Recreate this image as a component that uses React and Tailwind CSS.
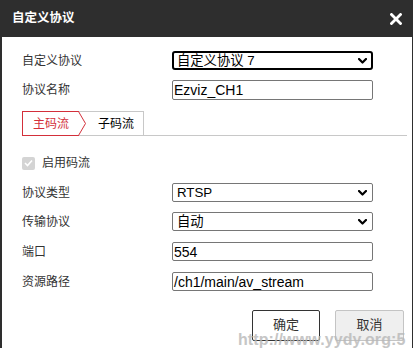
import React from "react";

const cjk = { fontFamily: '"Liberation Sans", "Noto Sans CJK SC", sans-serif' };

function Chevron() {
  return (
    <svg width="9" height="6" viewBox="0 0 9 6" className="shrink-0">
      <path d="M1 1 L4.5 4.5 L8 1" fill="none" stroke="#000" strokeWidth="2.2" strokeLinecap="round" strokeLinejoin="round" />
    </svg>
  );
}

function Label({ children }) {
  return <div className="w-[150px] shrink-0 text-[12px] leading-none text-[#333]">{children}</div>;
}

function FakeSelect({ value, focused }) {
  return (
    <div
      className={
        "w-[201px] h-full flex items-center justify-between bg-white text-[13.3px] leading-none text-black " +
        (focused ? "border-2 border-black rounded-[3px] pl-[3px] pr-[4px]" : "border border-[#767676] rounded-[2px] pl-[4px] pr-[5px]")
      }
    >
      <span>{value}</span>
      <Chevron />
    </div>
  );
}

function FakeInput({ value }) {
  return (
    <div className="w-[201px] h-full flex items-center border border-[#767676] rounded-[2px] pl-[1px] bg-white text-[14px] leading-none text-black">
      {value}
    </div>
  );
}

export default function App() {
  return (
    <div className="w-[413px] h-[348px] bg-[#2e2e2e] overflow-hidden relative" style={cjk}>
      <div className="h-[37px] flex items-center justify-between pl-[12px] pr-[11px]">
        <span className="text-white font-bold text-[12.5px] leading-none">自定义协议</span>
        <svg width="12" height="12" viewBox="0 0 12 12">
          <path d="M1.5 1.5 L10.5 10.5 M10.5 1.5 L1.5 10.5" stroke="#fff" strokeWidth="2.8" strokeLinecap="square" />
        </svg>
      </div>
      <div className="ml-[2px] mr-[1px] h-[311px] bg-white pl-[20px] pr-[5px] flex flex-col">
        <div className="mt-[14px] h-[19px] flex items-center">
          <Label>自定义协议</Label>
          <FakeSelect value="自定义协议 7" focused />
        </div>
        <div className="mt-[10px] h-[20px] flex items-center">
          <Label>协议名称</Label>
          <FakeInput value="Ezviz_CH1" />
        </div>
        <div className="mt-[11px] h-[25px] flex border-b border-[#c8c8c8]">
          <div className="relative h-[25px] w-[57px] border border-r-0 border-[#d32f3a] flex items-center pl-[10px] text-[12px] leading-none text-[#d32f3a] bg-white">
            主码流
            <svg className="absolute left-[55px] top-[-1px]" width="9" height="25" viewBox="0 0 9 25">
              <path d="M0.5 0.5 L7.5 12.5 L0.5 24.5" fill="#fff" stroke="#d32f3a" strokeWidth="1" />
            </svg>
          </div>
          <div className="h-[24px] w-[65px] border-t border-r border-[#c8c8c8] flex items-center pl-[19px] text-[12px] leading-none text-black">
            子码流
          </div>
        </div>
        <div className="mt-[20px] h-[14px] flex items-center">
          <div className="w-[13px] h-[13px] rounded-[2px] bg-[#d4d4d4] flex items-center justify-center">
            <svg width="9" height="8" viewBox="0 0 9 8">
              <path d="M1 4 L3.5 6.5 L8 1.5" fill="none" stroke="#fff" strokeWidth="1.6" />
            </svg>
          </div>
          <span className="ml-[7px] text-[12px] leading-none text-[#333]">启用码流</span>
        </div>
        <div className="mt-[13px] h-[19px] flex items-center">
          <Label>协议类型</Label>
          <FakeSelect value="RTSP" />
        </div>
        <div className="mt-[10px] h-[19px] flex items-center">
          <Label>传输协议</Label>
          <FakeSelect value="自动" />
        </div>
        <div className="mt-[11px] h-[19px] flex items-center">
          <Label>端口</Label>
          <FakeInput value="554" />
        </div>
        <div className="mt-[11px] h-[19px] flex items-center">
          <Label>资源路径</Label>
          <FakeInput value="/ch1/main/av_stream" />
        </div>
        <div className="mt-[19px] h-[31px] flex justify-end gap-[15px] pr-[3px]">
          <div className="w-[68px] h-[31px] border border-[#333] rounded-[2px] flex items-start pt-[7px] justify-center text-[13px] leading-none text-[#333] bg-white">
            确定
          </div>
          <div className="w-[69px] h-[31px] border border-[#c4c4c4] rounded-[2px] flex items-start pt-[7px] justify-center text-[13px] leading-none text-[#333] bg-[#efefef]">
            取消
          </div>
        </div>
      </div>
      <div className="absolute left-[238px] top-[332px] text-[16px] font-bold leading-none text-[#b8b8b8] opacity-80 tracking-[0.1px] whitespace-nowrap" style={{ fontFamily: '"Liberation Sans", sans-serif' }}>
        http://www.yydy.org:5
      </div>
    </div>
  );
}
